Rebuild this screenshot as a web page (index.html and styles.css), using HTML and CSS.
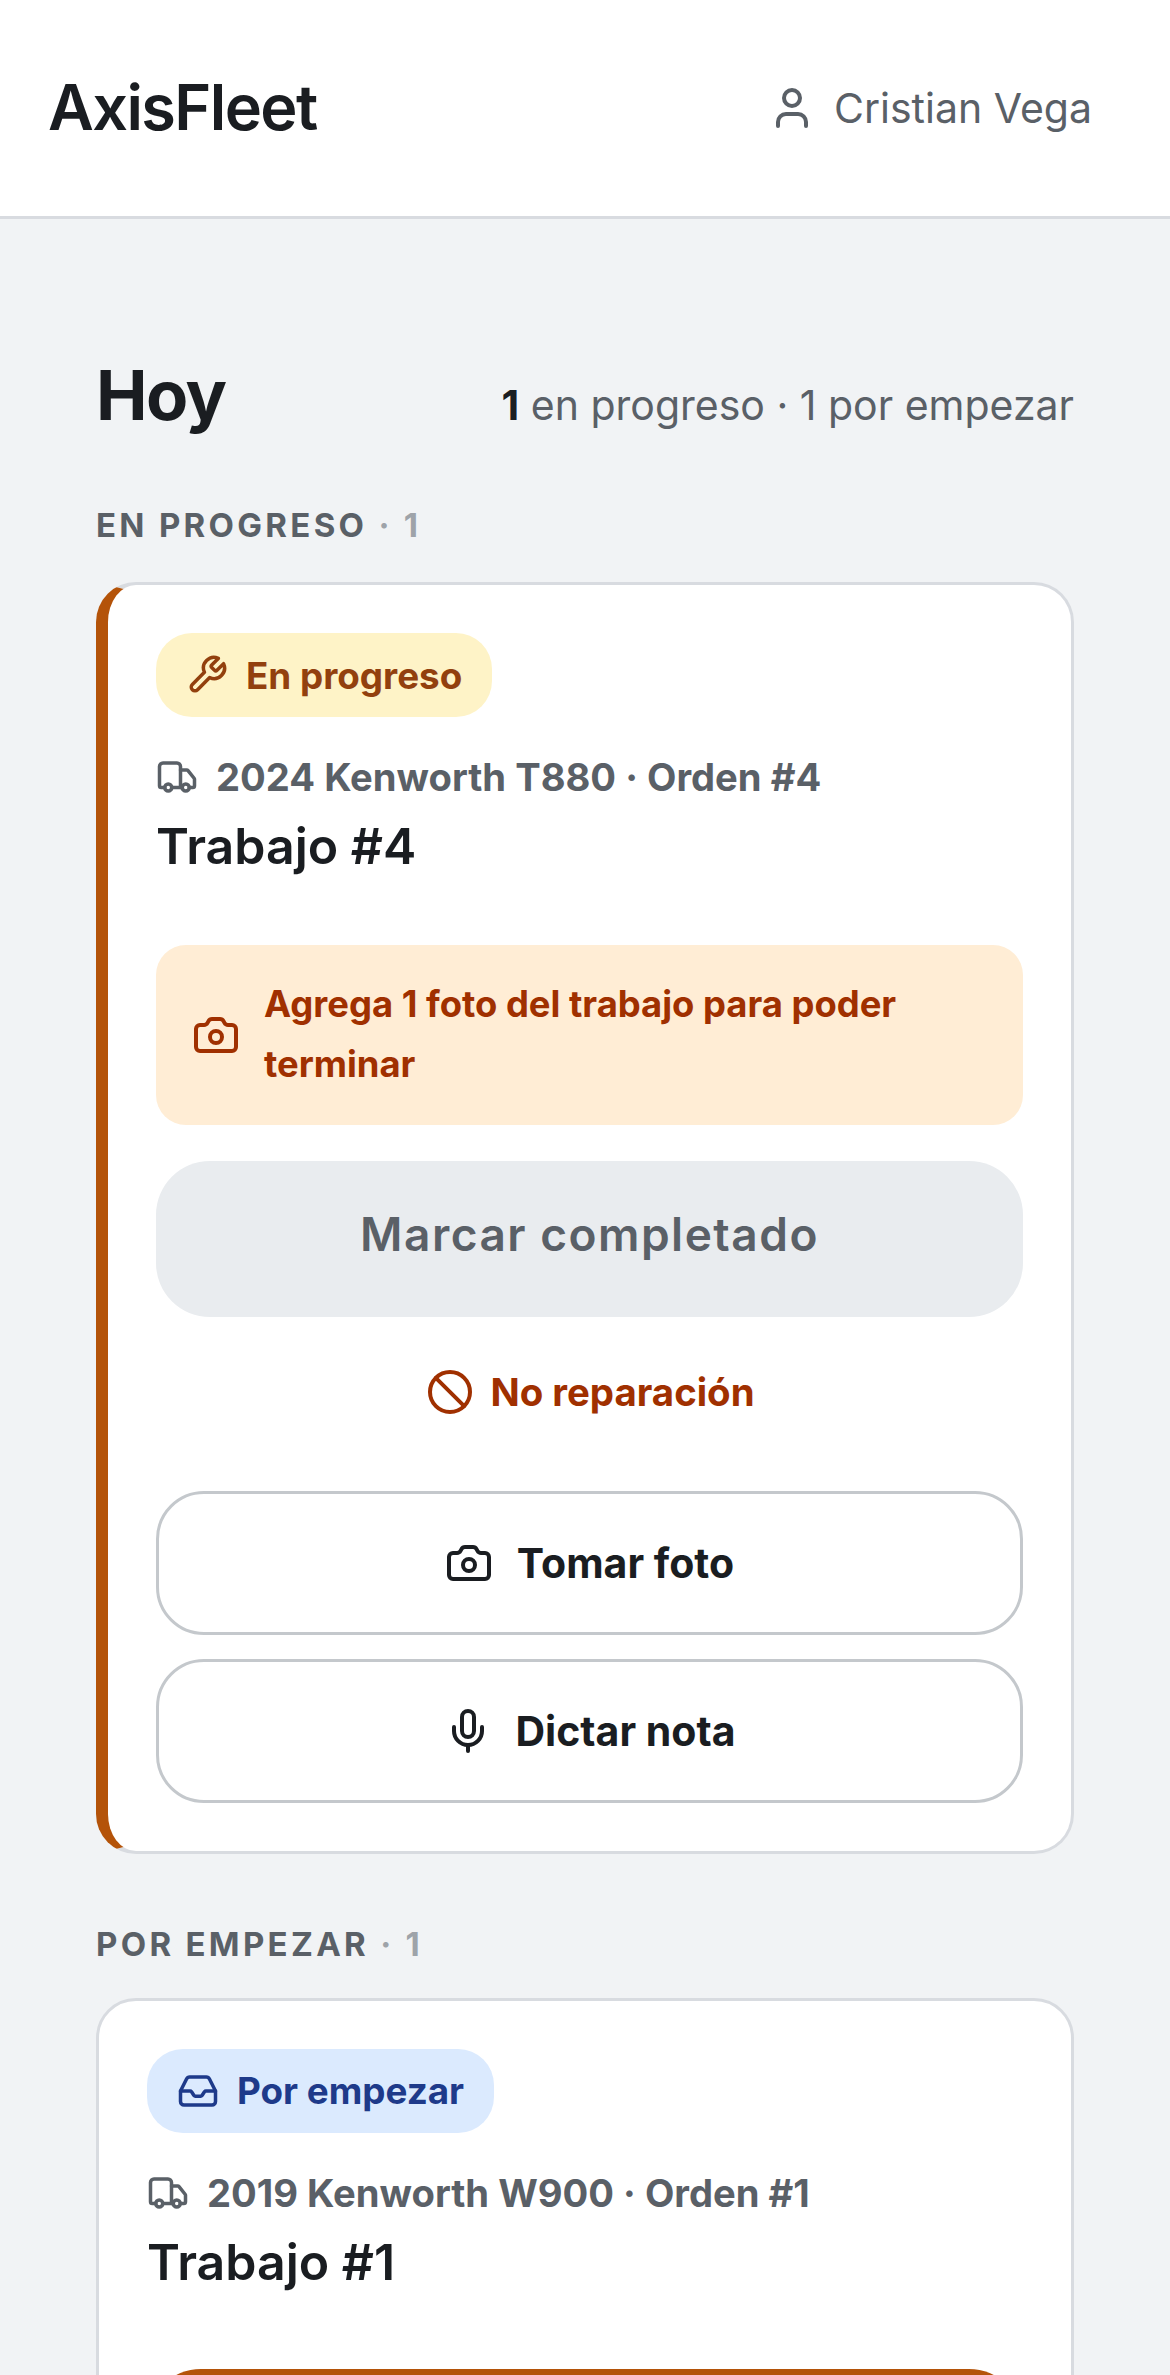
FILE: index.html
```html
<!DOCTYPE html>
<html lang="es">
<head>
<meta charset="utf-8">
<title>AxisFleet</title>
<link rel="stylesheet" href="styles.css">
</head>
<body>
<div class="page">
  <header class="topbar">
    <div class="brand">AxisFleet</div>
    <div class="user">
      <svg class="icon i48" viewBox="0 0 24 24"><path d="M19 21v-2a4 4 0 0 0-4-4H9a4 4 0 0 0-4 4v2"/><circle cx="12" cy="7" r="4"/></svg>
      <span>Cristian Vega</span>
    </div>
  </header>
  <main class="main">
    <div class="today">
      <h1 class="today-title">Hoy</h1>
      <p class="today-summary"><strong>1</strong> en progreso · 1 por empezar</p>
    </div>

    <section class="group">
      <h2 class="group-label">EN PROGRESO <span class="group-count">· 1</span></h2>
      <article class="card card-active">
        <div class="pill pill-amber">
          <svg class="icon i42" viewBox="0 0 24 24"><path d="M14.7 6.3a1 1 0 0 0 0 1.4l1.6 1.6a1 1 0 0 0 1.4 0l3.77-3.77a6 6 0 0 1-7.94 7.94l-6.91 6.91a2.12 2.12 0 0 1-3-3l6.91-6.91a6 6 0 0 1 7.94-7.94l-3.76 3.76z"/></svg>
          <span>En progreso</span>
        </div>
        <div class="vehicle">
          <svg class="icon i42" viewBox="0 0 24 24"><path d="M14 18V6a2 2 0 0 0-2-2H4a2 2 0 0 0-2 2v11a1 1 0 0 0 1 1h2"/><path d="M15 18H9"/><path d="M19 18h2a1 1 0 0 0 1-1v-3.65a1 1 0 0 0-.22-.624l-3.48-4.35A1 1 0 0 0 17.52 8H14"/><circle cx="17" cy="18" r="2"/><circle cx="7" cy="18" r="2"/></svg>
          <span>2024 Kenworth T880 · Orden #4</span>
        </div>
        <h3 class="job-title">Trabajo #4</h3>
        <div class="alert">
          <svg class="icon i48" viewBox="0 0 24 24"><path d="M13.997 4a2 2 0 0 1 1.76 1.05l.486.9A2 2 0 0 0 18.003 7H20a2 2 0 0 1 2 2v9a2 2 0 0 1-2 2H4a2 2 0 0 1-2-2V9a2 2 0 0 1 2-2h1.997a2 2 0 0 0 1.759-1.048l.489-.904A2 2 0 0 1 10.004 4z"/><circle cx="12" cy="13" r="3"/></svg>
          <span class="alert-text">Agrega 1 foto del trabajo para poder terminar</span>
        </div>
        <button class="btn-primary btn-disabled">Marcar completado</button>
        <div class="no-repair">
          <svg class="icon i48" viewBox="0 0 24 24"><circle cx="12" cy="12" r="10"/><path d="m4.9 4.9 14.2 14.2"/></svg>
          <span>No reparación</span>
        </div>
        <div class="actions">
          <button class="btn-outline">
            <svg class="icon i48" viewBox="0 0 24 24"><path d="M13.997 4a2 2 0 0 1 1.76 1.05l.486.9A2 2 0 0 0 18.003 7H20a2 2 0 0 1 2 2v9a2 2 0 0 1-2 2H4a2 2 0 0 1-2-2V9a2 2 0 0 1 2-2h1.997a2 2 0 0 0 1.759-1.048l.489-.904A2 2 0 0 1 10.004 4z"/><circle cx="12" cy="13" r="3"/></svg>
            <span>Tomar foto</span>
          </button>
          <button class="btn-outline">
            <svg class="icon i48" viewBox="0 0 24 24"><path d="M12 19v3"/><path d="M19 10v2a7 7 0 0 1-14 0v-2"/><rect x="9" y="2" width="6" height="13" rx="3"/></svg>
            <span>Dictar nota</span>
          </button>
        </div>
      </article>
    </section>

    <section class="group">
      <h2 class="group-label">POR EMPEZAR <span class="group-count">· 1</span></h2>
      <article class="card card-next">
        <div class="pill pill-blue">
          <svg class="icon i42" viewBox="0 0 24 24"><path d="M2 12h5.5a1 1 0 0 1 .8.4l1.4 2.2a1 1 0 0 0 .8.4h3a1 1 0 0 0 .8-.4l1.4-2.2a1 1 0 0 1 .8-.4H22"/><path d="M5.45 5.11 2 12v6a2 2 0 0 0 2 2h16a2 2 0 0 0 2-2v-6l-3.45-6.89A2 2 0 0 0 16.76 4H7.24a2 2 0 0 0-1.79 1.11z"/></svg>
          <span>Por empezar</span>
        </div>
        <div class="vehicle">
          <svg class="icon i42" viewBox="0 0 24 24"><path d="M14 18V6a2 2 0 0 0-2-2H4a2 2 0 0 0-2 2v11a1 1 0 0 0 1 1h2"/><path d="M15 18H9"/><path d="M19 18h2a1 1 0 0 0 1-1v-3.65a1 1 0 0 0-.22-.624l-3.48-4.35A1 1 0 0 0 17.52 8H14"/><circle cx="17" cy="18" r="2"/><circle cx="7" cy="18" r="2"/></svg>
          <span>2019 Kenworth W900 · Orden #1</span>
        </div>
        <h3 class="job-title">Trabajo #1</h3>
        <div class="btn-primary btn-start"></div>
      </article>
    </section>
  </main>
</div>
</body>
</html>
```
FILE: styles.css
```css
* { box-sizing: border-box; }
html, body { margin: 0; padding: 0; }
body {
  background: #f1f3f5;
  color: #1a1d21;
  font-family: Inter, "Noto Sans", sans-serif;
}
.page { height: 2375px; overflow: hidden; }
.icon {
  fill: none;
  stroke: currentColor;
  stroke-width: 2;
  stroke-linecap: round;
  stroke-linejoin: round;
  flex: none;
}
.i48 { width: 48px; height: 48px; }
.i42 { width: 42px; height: 42px; }

.topbar {
  height: 219px;
  background: #fff;
  border-bottom: 3px solid #d8dbe0;
  display: flex;
  align-items: center;
  justify-content: space-between;
  padding: 0 78px 0 48px;
}
.brand { font-size: 63px; font-weight: 600; letter-spacing: -1.6px; margin-top: -3px; }
.user { display: flex; align-items: center; gap: 18px; font-size: 41px; color: #5a6067; }

.main { padding: 131px 96px 0; }
.today { display: flex; align-items: baseline; justify-content: space-between; }
.today-title { margin: 0; font-size: 69px; line-height: 90px; font-weight: 700; letter-spacing: -1.5px; }
.today-summary { margin: 0; font-size: 41px; color: #5a6067; }
.today-summary strong { color: #1a1d21; font-weight: 700; }

.group { margin-bottom: 66px; }
.group-label {
  margin: 61px 0 0;
  font-size: 33px;
  line-height: 48px;
  font-weight: 700;
  letter-spacing: 3.3px;
  color: #5a6067;
}
.group + .group .group-label { margin-top: 0; }
.group-count { color: #9ea3a9; }

.card {
  margin-top: 33px;
  background: #fff;
  border: 3px solid #d8dbe0;
  border-radius: 40px;
  padding: 48px;
}
.card-active { border-left: 12px solid #b45309; }
.card-next { margin-top: 30px; }

.pill {
  display: inline-flex;
  align-items: center;
  gap: 18px;
  height: 84px;
  padding: 0 30px;
  border-radius: 36px;
  font-size: 36.8px;
  font-weight: 700;
}
.pill-amber { background: #fef3c7; color: #92400e; }
.pill-blue { background: #dbeafe; color: #1e3a8a; }

.vehicle {
  display: flex;
  align-items: center;
  gap: 18px;
  margin-top: 37px;
  font-size: 38.2px;
  font-weight: 700;
  color: #5a6067;
}
.job-title { margin: 10px 0 0; font-size: 50px; line-height: 72px; font-weight: 600; }

.alert {
  display: flex;
  align-items: center;
  gap: 24px;
  margin-top: 63px;
  padding: 30px 36px;
  height: 180px;
  background: #ffedd5;
  border-radius: 30px;
  color: #a03000;
  font-size: 36.4px;
  font-weight: 700;
  line-height: 60px;
}
.alert-text { margin-top: -2px; }
.btn-primary {
  display: block;
  width: 100%;
  height: 156px;
  margin-top: 36px;
  padding: 0 0 11px;
  border: 0;
  border-radius: 54px;
  font: 600 46px Inter, sans-serif;
  letter-spacing: 1.5px;
}
.btn-disabled { background: #e9ecef; color: #5a6067; }
.btn-start { background: #b45309; margin-top: 71px; }

.no-repair {
  display: flex;
  align-items: center;
  justify-content: center;
  gap: 16px;
  height: 78px;
  margin-top: 36px;
  padding-left: 2px;
  color: #a03000;
  font-size: 38.4px;
  font-weight: 700;
}
.actions { display: flex; flex-direction: column; gap: 24px; margin-top: 59.5px; }
.btn-outline {
  display: flex;
  align-items: center;
  justify-content: center;
  gap: 24px;
  height: 144px;
  background: #fff;
  border: 3px solid #c4c8cc;
  border-radius: 48px;
  color: #1a1d21;
  font: 700 41px Inter, sans-serif;
}
```
